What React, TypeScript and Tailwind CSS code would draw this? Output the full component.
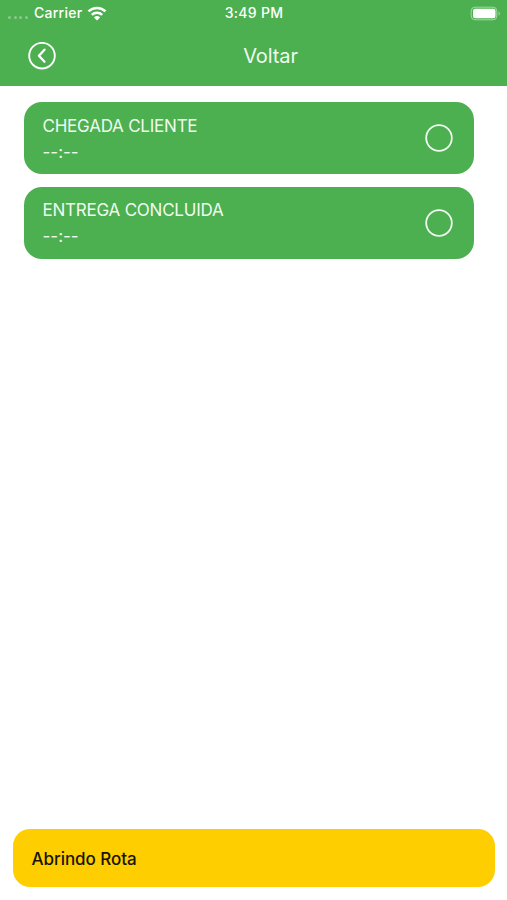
type StepProps = { title: string; time: string };

function StepCard({ title, time }: StepProps) {
  return (
    <button className="flex h-[72px] w-[450.5px] items-center justify-between rounded-[18px] bg-[#4caf50] pr-[21px] pl-[19px] text-left text-[#effbef]">
      <span className="flex flex-col pt-[1.5px]">
        <span className="text-[17px] leading-[26px] tracking-[-0.23px]">{title}</span>
        <span className="text-[17px] leading-[26px]">{time}</span>
      </span>
      <svg className="size-7" viewBox="0 0 28 28" fill="none" stroke="currentColor" strokeWidth="1.8">
        <circle cx="14" cy="14" r="12.8" />
      </svg>
    </button>
  );
}

function StatusBar() {
  return (
    <div className="grid h-[26px] grid-cols-3 items-center pr-1.5 pl-2 text-[14px] leading-[26px] font-medium">
      <div className="flex items-center">
        <span className="mt-2 flex w-[26px] gap-[2.5px]">
          {[0, 1, 2, 3].map((dot) => (
            <span key={dot} className="size-[3px] rounded-full bg-white/35" />
          ))}
        </span>
        <span className="tracking-[0.25px]">Carrier</span>
        <svg className="ml-[5px] h-[15px] w-5" viewBox="0 0 20 15" fill="none" stroke="white" strokeWidth="2.6">
          <path d="M1.5 5.4a12.2 12.2 0 0 1 17 0" />
          <path d="M4.8 8.9a7.5 7.5 0 0 1 10.4 0" />
          <path d="M10 14.5 6.9 11.4a4.5 4.5 0 0 1 6.2 0Z" fill="white" stroke="none" />
        </svg>
      </div>
      <span className="pr-[1px] text-center tracking-[0.3px]">3:49 PM</span>
      <svg className="h-[15px] w-[31px] justify-self-end" viewBox="0 0 31 15" fill="none">
        <rect x="1.2" y="1.2" width="25.6" height="12.6" rx="3.8" stroke="white" strokeOpacity=".5" />
        <rect x="3" y="2.7" width="22.5" height="9.6" rx="2.2" fill="white" />
        <path d="M28.6 5.4c1.6.6 1.6 3.6 0 4.2Z" fill="white" fillOpacity=".5" />
      </svg>
    </div>
  );
}

export default function App() {
  return (
    <div className="flex h-[900px] w-[507px] flex-col bg-white font-['Inter','Liberation_Sans',sans-serif]">
      <header className="h-[86px] bg-[#4caf50] text-white">
        <StatusBar />
        <div className="grid h-[59px] grid-cols-[84px_1fr_50px] items-center">
          <button aria-label="Voltar" className="ml-7 size-7">
            <svg className="size-7" viewBox="0 0 28 28" fill="none" stroke="white">
              <circle cx="14" cy="13.7" r="12.8" strokeWidth="1.9" />
              <path d="m16.5 7.7-5.6 6 5.6 6" strokeWidth="2.3" strokeLinecap="round" strokeLinejoin="round" />
            </svg>
          </button>
          <h1 className="text-center text-[20px] tracking-[-0.1px] text-[#effbef]">Voltar</h1>
        </div>
      </header>
      <main className="flex flex-1 flex-col gap-[12.2px] pt-[16.4px] pl-[23.5px]">
        <StepCard title="CHEGADA CLIENTE" time="--:--" />
        <StepCard title="ENTREGA CONCLUIDA" time="--:--" />
      </main>
      <footer className="pr-3 pb-[13px] pl-[13px]">
        <button className="flex h-[58px] w-full items-center rounded-[17px] bg-[#ffce00] pt-[3px] pl-[18.5px] text-[17px] font-medium tracking-[-0.05px] text-[#171400]">
          Abrindo Rota
        </button>
      </footer>
    </div>
  );
}
